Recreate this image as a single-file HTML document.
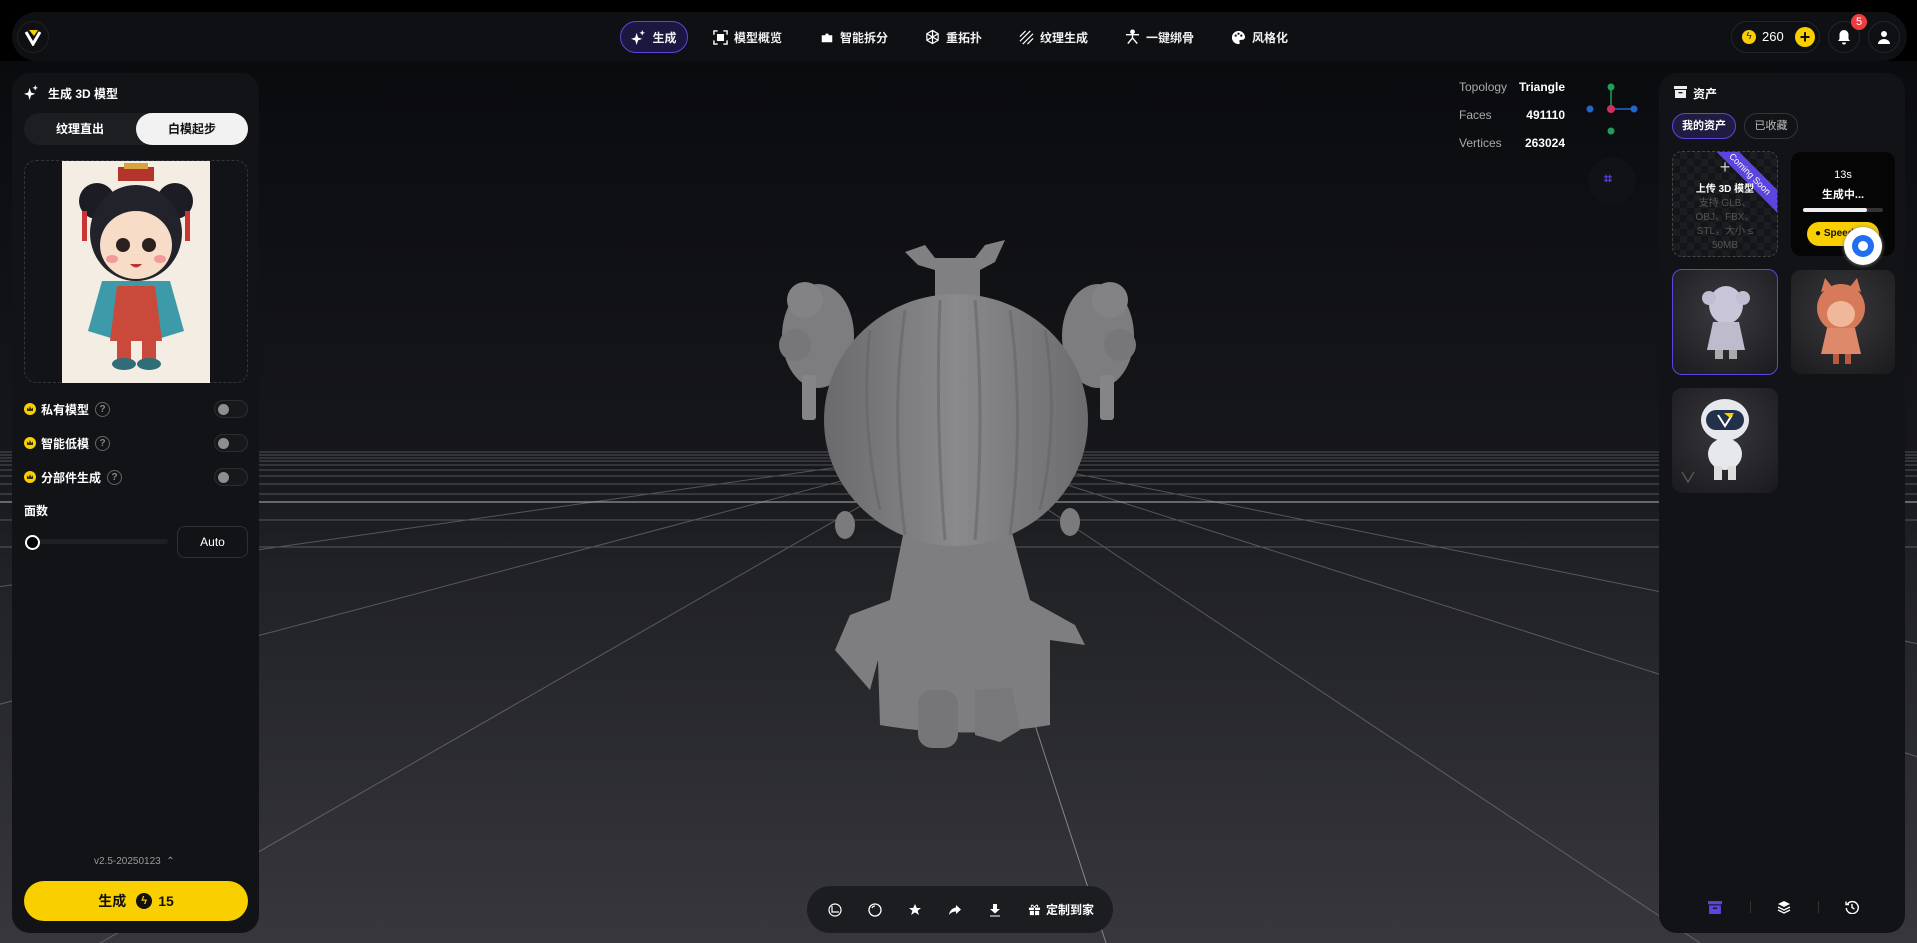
<!DOCTYPE html>
<html><head><meta charset="utf-8">
<style>
*{box-sizing:border-box;margin:0;padding:0}
body{width:1917px;height:943px;overflow:hidden;background:#000;font-family:"Liberation Sans","Noto Sans CJK SC",sans-serif;color:#fff;position:relative}
.abs{position:absolute}
.topbar{left:12px;top:12px;width:1895px;height:49px;background:#0f1014;border-radius:25px}
.nav{top:21px;height:32px;display:flex;align-items:center;font-size:12px;font-weight:bold;color:#f0f0f0}
.nav svg{margin-right:6px}
.panel{background:#121317;border-radius:18px}
.row{display:flex;align-items:center;font-size:12px;font-weight:bold}
.crown{width:12px;height:12px;border-radius:50%;background:#f9cf00;display:inline-block;margin-right:5px;position:relative}
.crown:after{content:"";position:absolute;left:3px;top:3px;width:6px;height:5px;background:#3a3000;clip-path:polygon(0 30%,30% 60%,50% 0,70% 60%,100% 30%,100% 100%,0 100%)}
.q{width:15px;height:15px;border:1px solid #666;border-radius:50%;font-size:10px;color:#888;display:inline-flex;align-items:center;justify-content:center;margin-left:6px}
.tog{width:34px;height:18px;border:1px solid #2c2d33;border-radius:9px;background:#17181c;position:absolute;right:0}
.tog:after{content:"";position:absolute;left:3px;top:3px;width:11px;height:11px;border-radius:50%;background:#8e8e8e}
.card{border-radius:10px;overflow:hidden}
</style></head><body>
<svg class="abs" style="left:0;top:0" width="1917" height="943">
<defs>
<linearGradient id="bg" x1="0" y1="0" x2="0" y2="1">
<stop offset="0" stop-color="#0a0b0e"/><stop offset="0.45" stop-color="#16171b"/><stop offset="0.55" stop-color="#1f2024"/><stop offset="1" stop-color="#37373c"/></linearGradient>
<linearGradient id="hd" x1="0" y1="0" x2="1" y2="0"><stop offset="0" stop-color="#6a6a6c"/><stop offset="0.5" stop-color="#8a8a8c"/><stop offset="1" stop-color="#6c6c6e"/></linearGradient>
</defs>
<rect x="0" y="61" width="1917" height="882" fill="url(#bg)"/>
<g stroke="#9a9aa0" stroke-width="1" opacity="0.45">
<line x1="0" y1="452" x2="1917" y2="452"/><line x1="0" y1="455" x2="1917" y2="455"/><line x1="0" y1="458" x2="1917" y2="458"/>
<line x1="0" y1="461" x2="1917" y2="461"/><line x1="0" y1="465" x2="1917" y2="465"/><line x1="0" y1="470" x2="1917" y2="470"/>
<line x1="0" y1="476" x2="1917" y2="476"/><line x1="0" y1="484" x2="1917" y2="484"/><line x1="0" y1="494" x2="1917" y2="494"/>
<line x1="0" y1="520" x2="1917" y2="520"/><line x1="0" y1="547" x2="1917" y2="547"/>
<line x1="958" y1="450" x2="-2500" y2="943"/><line x1="958" y1="450" x2="-900" y2="943"/><line x1="958" y1="450" x2="100" y2="943"/>
<line x1="958" y1="450" x2="3400" y2="943"/><line x1="958" y1="450" x2="2500" y2="943"/><line x1="958" y1="450" x2="1700" y2="943"/>
</g>
<line x1="0" y1="502" x2="1917" y2="502" stroke="#c8c8cc" stroke-width="1.3" opacity="0.7"/>
<line x1="966" y1="513" x2="1106" y2="943" stroke="#aaa" stroke-width="1" opacity="0.7"/>
<g fill="#7b7b7d">
<path d="M905 252 L925 245 L935 258 L975 258 L985 245 L1005 240 L995 262 L980 270 L980 300 L935 300 L935 270 L918 265 Z" fill="#808082"/>
<ellipse cx="818" cy="336" rx="36" ry="52" fill="#7d7d80"/>
<ellipse cx="1098" cy="336" rx="36" ry="52" fill="#7d7d80"/>
<circle cx="805" cy="300" r="18" fill="#838385"/><circle cx="1110" cy="300" r="18" fill="#838385"/>
<circle cx="795" cy="345" r="16" fill="#77777a"/><circle cx="1120" cy="345" r="16" fill="#77777a"/>
<rect x="802" y="375" width="14" height="45" rx="3" fill="#858587"/>
<rect x="1100" y="375" width="14" height="45" rx="3" fill="#858587"/>
<ellipse cx="845" cy="525" rx="10" ry="14"/><ellipse cx="1070" cy="522" rx="10" ry="14"/>
<path d="M905 525 L1010 525 L1030 600 L1075 625 L1085 645 L1050 640 L1050 725 Q965 740 880 725 L878 660 L870 690 L835 650 L850 615 L890 600 Z" fill="#7e7e80"/>
<rect x="918" y="690" width="40" height="58" rx="14" fill="#767678"/>
<path d="M975 690 L1012 688 L1020 730 L1000 742 L975 735 Z" fill="#78787a"/>
<ellipse cx="956" cy="420" rx="132" ry="126" fill="url(#hd)"/>
</g>
<g stroke="#666668" stroke-width="3" fill="none" opacity="0.6">
<path d="M870 330 Q860 420 880 510"/><path d="M905 310 Q890 420 905 535"/><path d="M940 300 Q935 420 945 540"/><path d="M975 300 Q985 420 975 540"/><path d="M1010 310 Q1025 420 1010 535"/><path d="M1045 330 Q1060 420 1040 510"/>
</g>
</svg>

<div class="abs topbar"></div>
<div class="abs" style="left:17px;top:21px;width:32px;height:32px;border-radius:50%;border:1px solid #222;background:#0f1014"></div>
<svg class="abs" style="left:23px;top:28px" width="20" height="18" viewBox="0 0 20 18"><path d="M3 4 L10 16 L17 4" stroke="#fff" stroke-width="3" fill="none"/><path d="M6 2 L15 2 L11 8 Z" fill="#f9cf00"/></svg>
<div class="abs nav" style="left:620px;width:68px;border:1px solid #5b45e0;background:#1a1840;border-radius:16px;justify-content:center">
<svg width="15" height="15" viewBox="0 0 16 16"><path d="M6 3 L7.5 8 L12 9.5 L7.5 11 L6 16 L4.5 11 L0 9.5 L4.5 8 Z M12 0 L12.8 2.2 L15 3 L12.8 3.8 L12 6 L11.2 3.8 L9 3 L11.2 2.2Z" fill="#fff"/></svg>生成</div>
<div class="abs nav" style="left:713px"><svg width="15" height="15" viewBox="0 0 16 16" fill="none" stroke="#fff" stroke-width="1.5"><path d="M1 5V1H5M11 1H15V5M15 11V15H11M5 15H1V11"/><rect x="5" y="5" width="6" height="6" fill="#fff"/></svg>模型概览</div>
<div class="abs nav" style="left:820px"><svg width="14" height="14" viewBox="0 0 16 16"><path d="M2 6h4a2 2 0 1 1 4 0h4v8H2z" fill="#fff"/></svg>智能拆分</div>
<div class="abs nav" style="left:925px"><svg width="15" height="16" viewBox="0 0 16 16" fill="none" stroke="#fff" stroke-width="1.3"><path d="M8 1 L14 4.5 V11.5 L8 15 L2 11.5 V4.5Z M2 4.5 L14 11.5 M14 4.5 L2 11.5 M8 1V15"/></svg>重拓扑</div>
<div class="abs nav" style="left:1019px"><svg width="15" height="15" viewBox="0 0 16 16" stroke="#fff" stroke-width="1.3"><path d="M1 7L7 1M1 12L12 1M4 15L15 4M9 15L15 9"/></svg>纹理生成</div>
<div class="abs nav" style="left:1125px"><svg width="15" height="16" viewBox="0 0 16 16" fill="none" stroke="#fff" stroke-width="1.5"><circle cx="8" cy="2.5" r="1.8" fill="#fff"/><path d="M1 5.5H15M8 5.5V9M8 9L3 15M8 9L13 15"/></svg>一键绑骨</div>
<div class="abs nav" style="left:1231px"><svg width="15" height="15" viewBox="0 0 16 16"><path d="M8 1a7 7 0 1 0 0 14c1.5 0 1.5-1.5 1-2.5s0-2 1.5-2H12a3 3 0 0 0 3-3A7 7 0 0 0 8 1z" fill="#fff"/><circle cx="5" cy="6" r="1.2" fill="#111"/><circle cx="8" cy="4" r="1.2" fill="#111"/><circle cx="11" cy="6" r="1.2" fill="#111"/></svg>风格化</div>
<div class="abs" style="left:1731px;top:21px;width:89px;height:32px;border:1px solid #24252b;border-radius:16px"></div>
<div class="abs" style="left:1742px;top:30px;width:14px;height:14px;border-radius:50%;background:#f9cf00;color:#222;font-size:10px;text-align:center;line-height:14px">ϟ</div>
<div class="abs" style="left:1762px;top:29px;font-size:13px">260</div>
<div class="abs" style="left:1795px;top:27px;width:20px;height:20px;border-radius:50%;background:#f9cf00;color:#111;font-size:18px;font-weight:bold;text-align:center;line-height:20px">+</div>
<div class="abs" style="left:1828px;top:21px;width:32px;height:32px;border:1px solid #24252b;border-radius:50%"></div>
<svg class="abs" style="left:1837px;top:29px" width="14" height="16" viewBox="0 0 14 16"><path d="M7 1a4.5 4.5 0 0 1 4.5 4.5V10L13 12H1L2.5 10V5.5A4.5 4.5 0 0 1 7 1z M5 13.5h4a2 2 0 0 1-4 0z" fill="#fff"/></svg>
<div class="abs" style="left:1851px;top:14px;width:16px;height:16px;border-radius:50%;background:#ee3b3b;font-size:11px;text-align:center;line-height:16px">5</div>
<div class="abs" style="left:1868px;top:21px;width:32px;height:32px;border:1px solid #24252b;border-radius:50%"></div>
<svg class="abs" style="left:1877px;top:30px" width="14" height="14" viewBox="0 0 14 14"><circle cx="7" cy="4" r="3" fill="#fff"/><path d="M1 14a6 5 0 0 1 12 0z" fill="#fff"/></svg>

<div class="abs panel" style="left:12px;top:73px;width:247px;height:860px"></div>
<svg class="abs" style="left:24px;top:85px" width="15" height="15" viewBox="0 0 16 16"><path d="M6 3 L7.5 8 L12 9.5 L7.5 11 L6 16 L4.5 11 L0 9.5 L4.5 8 Z M12 0 L12.8 2.2 L15 3 L12.8 3.8 L12 6 L11.2 3.8 L9 3 L11.2 2.2Z" fill="#fff"/></svg>
<div class="abs" style="left:48px;top:85px;font-size:12px;font-weight:bold">生成 3D 模型</div>
<div class="abs" style="left:24px;top:113px;width:224px;height:32px;background:#1d1e22;border-radius:16px"></div>
<div class="abs" style="left:24px;top:113px;width:112px;height:32px;line-height:32px;text-align:center;font-size:12px;font-weight:bold">纹理直出</div>
<div class="abs" style="left:136px;top:113px;width:112px;height:32px;line-height:32px;text-align:center;font-size:12px;font-weight:bold;background:#f2f2f2;color:#111;border-radius:16px">白模起步</div>
<div class="abs" style="left:24px;top:160px;width:224px;height:223px;border:1px dashed #34353b;border-radius:12px"></div>
<svg class="abs" style="left:62px;top:161px" width="148" height="222" viewBox="0 0 148 222">
<rect width="148" height="222" fill="#f3ede3"/>
<rect x="56" y="6" width="36" height="14" fill="#b3342a"/><rect x="62" y="2" width="24" height="6" fill="#d8a33a"/>
<circle cx="35" cy="40" r="18" fill="#1c1c24"/><circle cx="113" cy="40" r="18" fill="#1c1c24"/>
<ellipse cx="74" cy="72" rx="46" ry="48" fill="#22222a"/>
<ellipse cx="74" cy="84" rx="36" ry="34" fill="#f7dcc8"/>
<circle cx="61" cy="84" r="7" fill="#2a2020"/><circle cx="87" cy="84" r="7" fill="#2a2020"/>
<ellipse cx="50" cy="98" rx="6" ry="4" fill="#f29a9a"/><ellipse cx="98" cy="98" rx="6" ry="4" fill="#f29a9a"/>
<path d="M68 103 Q74 110 80 103Z" fill="#b33"/>
<rect x="20" y="50" width="5" height="30" fill="#c33"/><rect x="123" y="50" width="5" height="30" fill="#c33"/>
<path d="M40 120 L108 120 L122 170 L96 178 L52 178 L26 170 Z" fill="#3d9aa8"/>
<path d="M55 125 L93 125 L100 180 L48 180 Z" fill="#c9493a"/>
<rect x="55" y="178" width="14" height="22" fill="#c9493a"/><rect x="80" y="178" width="14" height="22" fill="#c9493a"/>
<ellipse cx="62" cy="203" rx="12" ry="6" fill="#2f6d78"/><ellipse cx="87" cy="203" rx="12" ry="6" fill="#2f6d78"/>
</svg>
<div class="abs row" style="left:24px;top:400px;width:224px;height:18px"><span class="crown"></span>私有模型<span class="q">?</span><span class="tog"></span></div>
<div class="abs row" style="left:24px;top:434px;width:224px;height:18px"><span class="crown"></span>智能低模<span class="q">?</span><span class="tog"></span></div>
<div class="abs row" style="left:24px;top:468px;width:224px;height:18px"><span class="crown"></span>分部件生成<span class="q">?</span><span class="tog"></span></div>
<div class="abs" style="left:24px;top:502px;font-size:12px;font-weight:bold">面数</div>
<div class="abs" style="left:30px;top:539px;width:138px;height:5px;background:#1e1f24;border-radius:3px"></div>
<div class="abs" style="left:25px;top:535px;width:15px;height:15px;border-radius:50%;border:2.5px solid #fff;background:#000"></div>
<div class="abs" style="left:177px;top:526px;width:71px;height:32px;border:1px solid #2e2f35;border-radius:8px;text-align:center;line-height:30px;font-size:12px">Auto</div>
<div class="abs" style="left:94px;top:856px;font-size:10px;color:#9a9a9a">v2.5-20250123 &nbsp;⌃</div>
<div class="abs" style="left:24px;top:881px;width:224px;height:40px;background:#f9cf00;border-radius:20px;color:#111;font-size:14px;font-weight:bold;display:flex;align-items:center;justify-content:center">生成 <span style="display:inline-block;width:16px;height:16px;border-radius:50%;background:#111;color:#f9cf00;font-size:11px;text-align:center;line-height:16px;margin:0 6px 0 10px">ϟ</span>15</div>

<div class="abs" style="left:1459px;top:73px;font-size:12px;color:#aaa;line-height:28px">Topology<br>Faces<br>Vertices</div>
<div class="abs" style="left:1510px;top:73px;width:55px;font-size:12px;font-weight:bold;text-align:right;line-height:28px">Triangle<br>491110<br>263024</div>
<svg class="abs" style="left:1584px;top:80px" width="56" height="60"><line x1="27" y1="29" x2="27" y2="8" stroke="#1e9e5a" stroke-width="1.5"/><line x1="27" y1="29" x2="50" y2="29" stroke="#2266cc" stroke-width="1.5"/><circle cx="27" cy="7" r="3.5" fill="#1e9e5a"/><circle cx="27" cy="51" r="3.5" fill="#1e9e5a"/><circle cx="6" cy="29" r="3.5" fill="#2266cc"/><circle cx="50" cy="29" r="3.5" fill="#2266cc"/><circle cx="27" cy="29" r="4" fill="#d03060"/></svg>
<div class="abs" style="left:1588px;top:157px;width:48px;height:48px;border-radius:50%;background:#111216"></div>
<div class="abs" style="left:1604px;top:170px;color:#5b45e0;font-size:14px;font-weight:bold">⌗</div>

<div class="abs" style="left:807px;top:886px;width:306px;height:47px;background:#1c1d21;border-radius:24px;display:flex;align-items:center;font-size:12px;font-weight:bold">
<svg style="position:absolute;left:21px" width="14" height="14" viewBox="0 0 14 14" fill="none" stroke="#fff" stroke-width="1.2"><circle cx="7" cy="7" r="6"/><path d="M4 3V9H11"/></svg>
<svg style="position:absolute;left:61px" width="14" height="14" viewBox="0 0 14 14" fill="none" stroke="#fff" stroke-width="1.3"><circle cx="7" cy="7" r="6"/><path d="M4 5Q5 3 7 3"/></svg>
<svg style="position:absolute;left:101px" width="14" height="14" viewBox="0 0 14 14"><path d="M7 1L8.8 5H13L9.6 7.7 10.9 12 7 9.4 3.1 12 4.4 7.7 1 5H5.2Z" fill="#fff"/></svg>
<svg style="position:absolute;left:141px" width="14" height="14" viewBox="0 0 14 14"><path d="M8 2L13 6.5 8 11V8.5C5 8.5 3 9.5 1 12 1.5 8 4 5 8 4.5Z" fill="#fff"/></svg>
<svg style="position:absolute;left:181px" width="14" height="14" viewBox="0 0 14 14"><path d="M5 1H9V6H12L7 10.5 2 6H5Z M2 12.5H12V13.5H2Z" fill="#fff"/></svg>
<svg style="position:absolute;left:221px" width="13" height="13" viewBox="0 0 14 14"><path d="M1 5H13V7.5H1Z M2 8.5H12V13H2Z" fill="#fff"/><path d="M7 5V13" stroke="#1c1d21" stroke-width="1.2"/><path d="M7 5C5 1 2.5 2 4 4.5M7 5C9 1 11.5 2 10 4.5" stroke="#fff" fill="none"/></svg>
<span style="position:absolute;left:239px">定制到家</span>
</div>

<div class="abs panel" style="left:1659px;top:73px;width:246px;height:860px"></div>
<svg class="abs" style="left:1674px;top:85px" width="13" height="13" viewBox="0 0 13 13"><rect x="0" y="1" width="13" height="3" fill="#eee"/><rect x="1" y="5" width="11" height="8" fill="#eee"/><rect x="4.5" y="7" width="4" height="1.3" fill="#121317"/></svg>
<div class="abs" style="left:1693px;top:85px;font-size:12px;font-weight:bold">资产</div>
<div class="abs" style="left:1672px;top:113px;width:64px;height:26px;border:1px solid #5b45e0;background:#1e1c40;border-radius:13px;font-size:11px;font-weight:bold;text-align:center;line-height:24px">我的资产</div>
<div class="abs" style="left:1744px;top:113px;width:54px;height:26px;border:1px solid #34353b;border-radius:13px;font-size:11px;color:#bbb;text-align:center;line-height:24px">已收藏</div>
<div class="abs card" style="left:1672px;top:151px;width:106px;height:106px;border:1px dashed #444;background:repeating-conic-gradient(#1c1d21 0 25%,#141518 0 50%) 0 0/14px 14px">
<div style="position:absolute;right:-28px;top:14px;width:110px;height:16px;background:#5b45e0;transform:rotate(45deg);font-size:9px;text-align:center;line-height:16px">Coming Soon</div>
<div style="position:absolute;left:0;width:100%;top:5px;text-align:center;font-size:18px;color:#ccc">+</div>
<div style="position:absolute;left:0;width:100%;top:28px;text-align:center;font-size:10px;font-weight:bold">上传 3D 模型</div>
<div style="position:absolute;left:12px;width:80px;top:45px;text-align:center;font-size:10px;color:#555;line-height:14px">支持 GLB、OBJ、FBX、STL，大小 ≤ 50MB</div>
</div>
<div class="abs card" style="left:1791px;top:152px;width:104px;height:104px;background:#050506">
<div style="text-align:center;font-size:11px;margin-top:17px">13s</div>
<div style="text-align:center;font-size:11px;font-weight:bold;margin-top:5px">生成中...</div>
<div style="margin:6px auto 0;width:80px;height:4px;background:#333;border-radius:2px"><div style="width:64px;height:4px;background:#eee;border-radius:2px"></div></div>
<div style="margin:10px 0 0 16px;width:72px;height:24px;background:#f9cf00;border-radius:12px;color:#111;font-size:10px;font-weight:bold;line-height:24px;padding-left:8px">● Speed</div>
</div>
<div class="abs" style="left:1844px;top:227px;width:38px;height:38px;border-radius:50%;background:#fff;box-shadow:0 0 4px #888"></div>
<div class="abs" style="left:1852px;top:235px;width:22px;height:22px;border-radius:50%;background:#1f6ff0"></div>
<div class="abs" style="left:1858px;top:241px;width:10px;height:10px;border-radius:50%;background:#fff"></div>
<div class="abs card" style="left:1672px;top:269px;width:106px;height:106px;border:1px solid #5b45e0;background:radial-gradient(circle at 50% 40%,#3a3a40,#1a1a1e)">
<svg width="106" height="106"><ellipse cx="53" cy="35" rx="17" ry="19" fill="#c8c6d8"/><circle cx="36" cy="28" r="7" fill="#c0bed0"/><circle cx="70" cy="28" r="7" fill="#c0bed0"/><path d="M40 52H66L72 80H34Z" fill="#bebccc"/><rect x="42" y="80" width="8" height="9" fill="#aaa"/><rect x="56" y="80" width="8" height="9" fill="#aaa"/></svg></div>
<div class="abs card" style="left:1791px;top:270px;width:104px;height:104px;background:radial-gradient(circle at 50% 40%,#3a3a3e,#1a1a1d)">
<svg width="104" height="104"><ellipse cx="50" cy="38" rx="24" ry="24" fill="#d77a5a"/><path d="M30 22L34 8 42 18Z M70 22L66 8 58 18Z" fill="#d77a5a"/><ellipse cx="50" cy="44" rx="14" ry="13" fill="#f0b79a"/><path d="M36 58H64L70 84H30Z" fill="#de8a6a"/><rect x="42" y="84" width="6" height="10" fill="#b85a3e"/><rect x="54" y="84" width="6" height="10" fill="#b85a3e"/></svg></div>
<div class="abs card" style="left:1672px;top:388px;width:106px;height:105px;background:radial-gradient(circle at 50% 40%,#38383c,#1a1a1e)">
<svg width="106" height="105"><ellipse cx="53" cy="32" rx="24" ry="21" fill="#e6e8ec"/><rect x="34" y="22" width="38" height="20" rx="10" fill="#223049"/><path d="M46 27L53 38 60 27" stroke="#fff" stroke-width="2" fill="none"/><path d="M52 25H62L58 30Z" fill="#f9cf00"/><ellipse cx="53" cy="66" rx="17" ry="16" fill="#e6e8ec"/><rect x="42" y="78" width="8" height="14" fill="#ddd"/><rect x="56" y="78" width="8" height="14" fill="#ddd"/><path d="M10 84L16 94 22 84" stroke="#555" stroke-width="1.5" fill="none"/></svg></div>
<svg class="abs" style="left:1708px;top:900px" width="14" height="14" viewBox="0 0 13 13"><rect x="0" y="1" width="13" height="3" fill="#5b45e0"/><rect x="1" y="5" width="11" height="8" fill="#5b45e0"/><rect x="4.5" y="7" width="4" height="1.3" fill="#121317"/></svg>
<div class="abs" style="left:1750px;top:901px;width:1px;height:12px;background:#333"></div>
<svg class="abs" style="left:1777px;top:900px" width="14" height="14" viewBox="0 0 14 14"><path d="M7 1L13 4 7 7 1 4Z" fill="#fff"/><path d="M1 7L7 10 13 7M1 10L7 13 13 10" stroke="#fff" stroke-width="1.4" fill="none"/></svg>
<div class="abs" style="left:1818px;top:901px;width:1px;height:12px;background:#333"></div>
<svg class="abs" style="left:1845px;top:900px" width="14" height="14" viewBox="0 0 14 14" fill="none" stroke="#fff" stroke-width="1.4"><path d="M2.5 4A6 6 0 1 1 1.3 8"/><path d="M1 1.5V4.5H4"/><path d="M7 4V7.5L9.5 9"/></svg>
</body></html>
